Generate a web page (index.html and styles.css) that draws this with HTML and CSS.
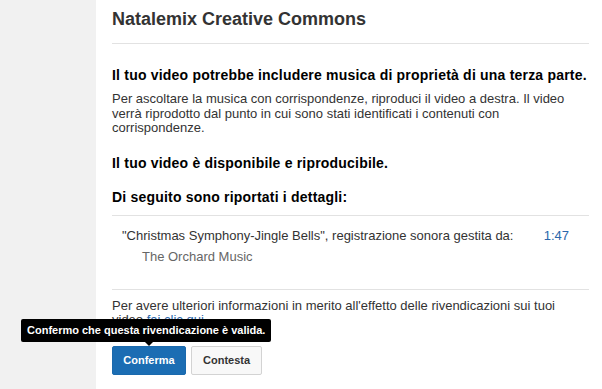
FILE: index.html
```html
<!DOCTYPE html>
<html lang="it">

<head>
    <meta charset="UTF-8">
    <meta name="viewport" content="width=device-width, initial-scale=1.0">
    <title>Natalemix Creative Commons</title>
    <link rel="stylesheet" href="styles.css">
</head>

<body>
    <div class="page">
        <!-- barra laterale -->
        <div class="side"></div>

        <!-- contenuto -->
        <div class="main">
            <h1 class="title">Natalemix Creative Commons</h1>

            <h2 class="head">Il tuo video potrebbe includere musica di proprietà di una terza parte.</h2>
            <p class="text">Per ascoltare la musica con corrispondenze, riproduci il video a destra. Il video verrà riprodotto dal punto in cui sono stati identificati i contenuti con corrispondenze.</p>

            <h2 class="head avail">Il tuo video è disponibile e riproducibile.</h2>
            <h2 class="head detail">Di seguito sono riportati i dettagli:</h2>

            <div class="match">
                <div class="matchRow">
                    <span>"Christmas Symphony-Jingle Bells", registrazione sonora gestita da:</span>
                    <a href="#" class="time">1:47</a>
                </div>
                <div class="owner">The Orchard Music</div>
            </div>

            <p class="text more">Per avere ulteriori informazioni in merito all'effetto delle rivendicazioni sui tuoi video <a href="#">fai clic qui</a>.</p>

            <div class="btns">
                <div class="tipWrap">
                    <span class="tip">Confermo che questa rivendicazione è valida.</span>
                    <a href="#" class="btn primary">Conferma</a>
                </div>
                <a href="#" class="btn">Contesta</a>
            </div>
        </div>
    </div>
</body>

</html>
```

FILE: styles.css
```css
/* reset */
* {
    margin: 0;
    padding: 0;
    box-sizing: border-box;
}

body {
    font-family: "Liberation Sans", Arial, sans-serif;
    color: #333;
    background: #fff;
}

a {
    text-decoration: none;
}

/* layout */
.page {
    display: flex;
    min-height: 389px;
}

.side {
    width: 96px;
    flex-shrink: 0;
    background: #f1f1f1;
}

.main {
    width: 477px;
    margin-left: 16px;
}

/* title */
.title {
    font-size: 18px;
    line-height: 24px;
    padding: 7px 0 12px;
    border-bottom: 1px solid #e2e2e2;
    color: #333;
}

/* headings */
.head {
    font-size: 14px;
    line-height: 18px;
    letter-spacing: 0.2px;
    color: #000;
    margin-top: 22px;
}

.head.avail {
    margin-top: 18px;
}

.head.detail {
    margin-top: 16px;
}

.text {
    font-size: 13px;
    line-height: 14.5px;
    margin-top: 8px;
}

/* match */
.match {
    margin-top: 9px;
    border-top: 1px solid #e2e2e2;
    border-bottom: 1px solid #e2e2e2;
    padding: 12px 0 24px 10px;
    font-size: 13px;
    line-height: 16px;
}

.matchRow {
    display: flex;
    justify-content: space-between;
    padding-right: 20px;
}

.time {
    color: #2b67ab;
}

.owner {
    color: #666;
    padding-left: 20px;
    margin-top: 5px;
}

.more {
    margin-top: 9px;
}

.more a {
    color: #2b67ab;
}

/* buttons */
.btns {
    display: flex;
    gap: 5px;
    margin-top: 18px;
}

.tipWrap {
    position: relative;
}

.btn {
    display: block;
    height: 29px;
    padding: 0 11px;
    font-size: 11px;
    font-weight: bold;
    line-height: 27px;
    color: #333;
    background: #f8f8f8;
    border: 1px solid #d3d3d3;
    border-radius: 2px;
}

.btn.primary {
    color: #fff;
    background: #1b6db3;
    border-color: #1a69ad;
    width: 74px;
    text-align: center;
    padding: 0;
}

/* tooltip */
.tip {
    position: absolute;
    left: -91px;
    bottom: 33px;
    white-space: nowrap;
    background: #000;
    color: #fff;
    font-size: 11px;
    font-weight: bold;
    line-height: 23px;
    padding: 0 6px;
    border-radius: 2px;
}

.tip::after {
    content: "";
    position: absolute;
    left: 123px;
    bottom: -4px;
    border: 5px solid transparent;
    border-bottom: 0;
    border-top-color: #000;
}
```
